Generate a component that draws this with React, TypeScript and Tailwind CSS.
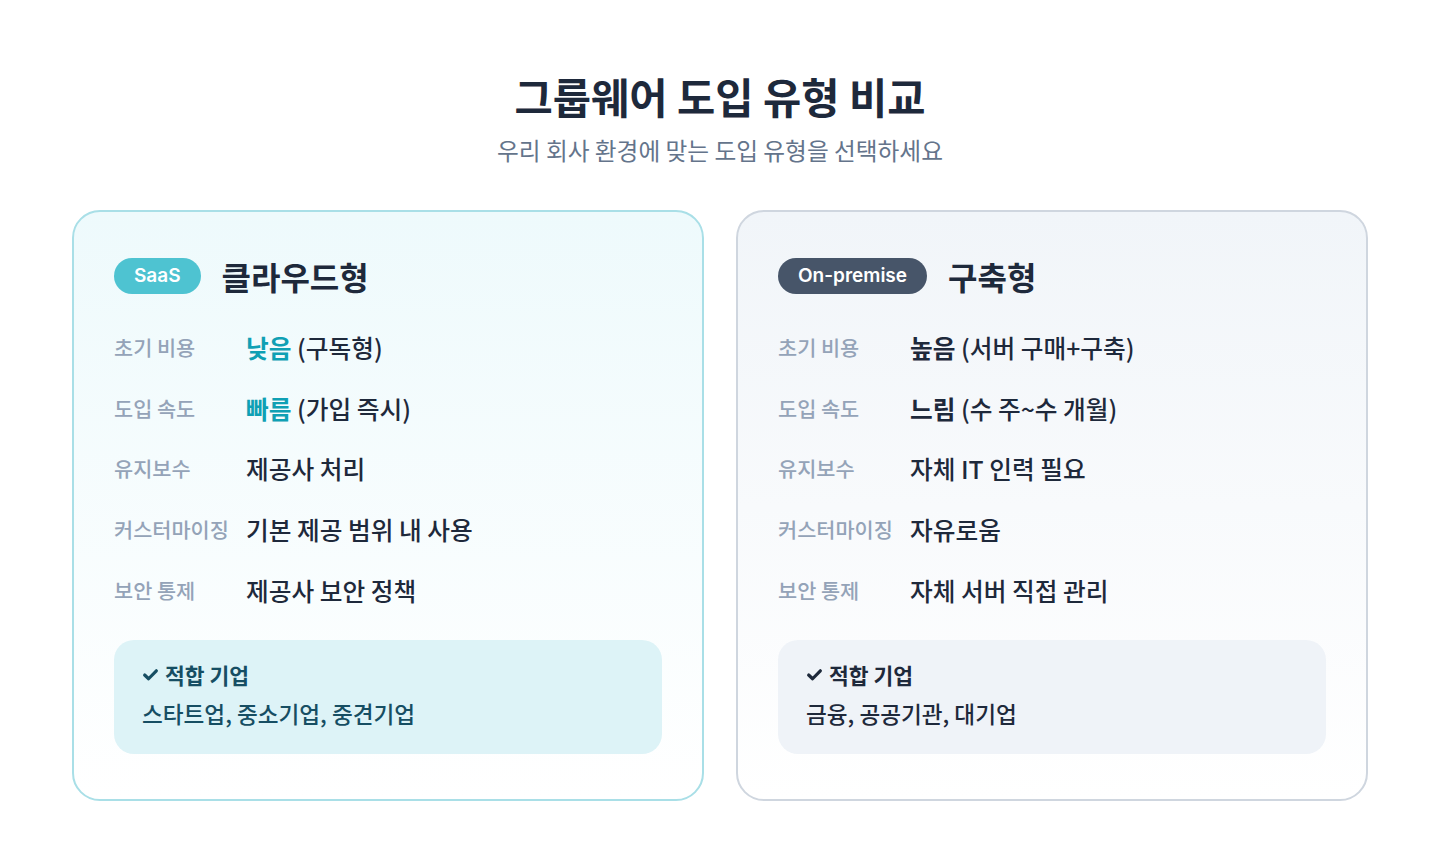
import React from "react";

const FONT = { fontFamily: '"Noto Sans CJK KR", "Noto Sans", sans-serif' };
const LATIN = { fontFamily: 'Inter, "Noto Sans CJK KR", sans-serif' };

type Row = { label: string; strong?: string; rest: string };

function Check({ color }: { color: string }) {
  return (
    <svg width="17" height="17" viewBox="0 0 16 16" className="mr-[6px] shrink-0">
      <polyline points="2.5,8.5 6.2,12 13.5,4.5" fill="none" stroke={color} strokeWidth="3" strokeLinecap="round" strokeLinejoin="round" />
    </svg>
  );
}

function Card({
  variant,
  badge,
  title,
  rows,
  fit,
}: {
  variant: "cloud" | "onprem";
  badge: string;
  title: string;
  rows: Row[];
  fit: string;
}) {
  const cloud = variant === "cloud";
  return (
    <div
      className={
        cloud
          ? "flex-1 rounded-[28px] border-2 border-[#a9dfe7] bg-gradient-to-b from-[#eefafc] to-[#ffffff] px-10 pt-[46px] pb-[45px]"
          : "flex-1 rounded-[28px] border-2 border-[#cfd6df] bg-gradient-to-b from-[#f1f5f9] to-[#ffffff] px-10 pt-[46px] pb-[45px]"
      }
    >
      <div className="flex h-9 items-center gap-[21px]">
        <span
          style={LATIN}
          className={
            cloud
              ? "flex h-9 items-center rounded-full bg-[#4ec3d1] px-5 text-[19px] font-semibold text-white"
              : "flex h-9 items-center rounded-full bg-[#475569] px-5 text-[19px] font-semibold text-white"
          }
        >
          {badge}
        </span>
        <h2 className="text-[32px] font-bold leading-9 text-[#1e293b]">{title}</h2>
      </div>
      <div className="mt-[23px] flex flex-col">
        {rows.map((r) => (
          <div key={r.label} className="flex h-[60.75px] items-center">
            <div className="w-[132px] shrink-0 text-[20.8px] font-medium text-[#94a3b8]">{r.label}</div>
            <div className="text-[24.7px] font-medium text-[#1e293b]">
              {r.strong && (
                <span className={cloud ? "font-bold text-[#0fa0b4]" : "font-bold text-[#1e293b]"}>{r.strong}</span>
              )}
              {r.rest}
            </div>
          </div>
        ))}
      </div>
      <div
        className={
          cloud
            ? "mt-[19px] rounded-[20px] bg-[#ddf3f7] px-7 pt-[23px] pb-[25px] text-[#164e63]"
            : "mt-[19px] rounded-[20px] bg-[#eff3f8] px-7 pt-[23px] pb-[25px] text-[#1e293b]"
        }
      >
        <div className="flex items-center text-[21.5px] font-bold leading-6">
          <Check color={cloud ? "#164e63" : "#1e293b"} />
          적합 기업
        </div>
        <div className="mt-3 text-[22.6px] font-medium leading-[30px]">{fit}</div>
      </div>
    </div>
  );
}

export default function App() {
  return (
    <div style={FONT} className="min-h-[860px] w-full bg-white pt-[72px]">
      <h1 className="text-center text-[41.6px] font-bold leading-[48px] text-[#1e293b]">그룹웨어 도입 유형 비교</h1>
      <p className="mt-[14px] text-center text-[23.7px] leading-8 text-[#64748b]">우리 회사 환경에 맞는 도입 유형을 선택하세요</p>
      <div className="mx-auto mt-[44px] flex w-[1296px] gap-8">
        <Card
          variant="cloud"
          badge="SaaS"
          title="클라우드형"
          rows={[
            { label: "초기 비용", strong: "낮음", rest: " (구독형)" },
            { label: "도입 속도", strong: "빠름", rest: " (가입 즉시)" },
            { label: "유지보수", rest: "제공사 처리" },
            { label: "커스터마이징", rest: "기본 제공 범위 내 사용" },
            { label: "보안 통제", rest: "제공사 보안 정책" },
          ]}
          fit="스타트업, 중소기업, 중견기업"
        />
        <Card
          variant="onprem"
          badge="On-premise"
          title="구축형"
          rows={[
            { label: "초기 비용", strong: "높음", rest: " (서버 구매+구축)" },
            { label: "도입 속도", strong: "느림", rest: " (수 주~수 개월)" },
            { label: "유지보수", rest: "자체 IT 인력 필요" },
            { label: "커스터마이징", rest: "자유로움" },
            { label: "보안 통제", rest: "자체 서버 직접 관리" },
          ]}
          fit="금융, 공공기관, 대기업"
        />
      </div>
    </div>
  );
}
